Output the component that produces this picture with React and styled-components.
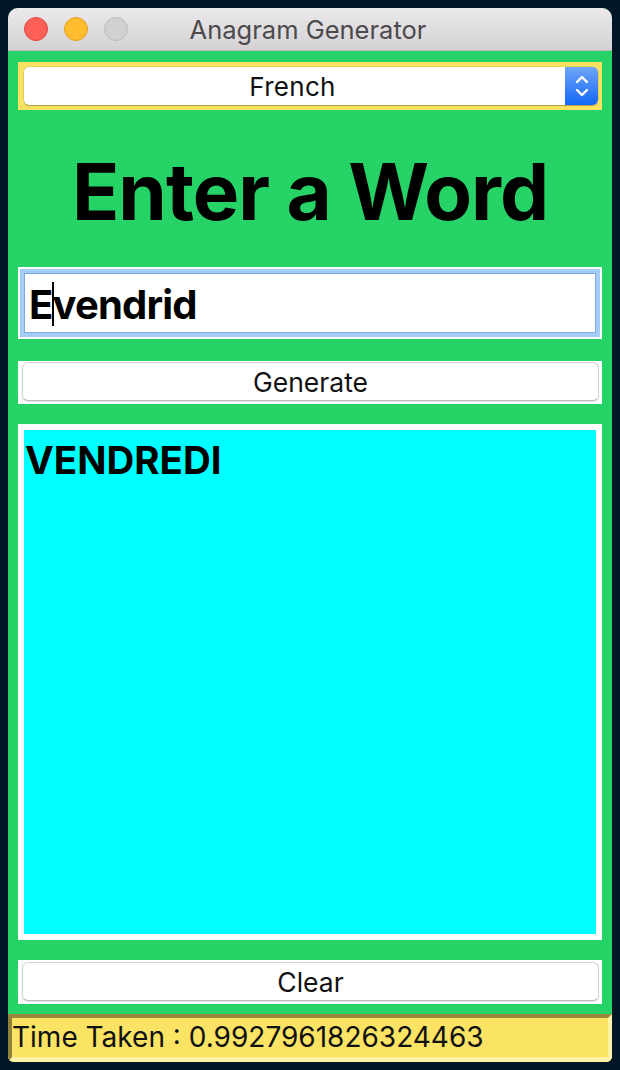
import React from "react";
import styled, { createGlobalStyle } from "styled-components";

const GlobalStyle = createGlobalStyle`
  html, body {
    margin: 0;
    padding: 0;
    background: #011627;
  }
  body {
    font-family: Inter, "Liberation Sans", sans-serif;
  }
`;

const Window = styled.div`
  margin: 8px;
  width: 604px;
  height: 1054px;
  display: flex;
  flex-direction: column;
  border-radius: 10px 10px 6px 6px;
  overflow: hidden;
  background: #25d366;
`;

const TitleBar = styled.div`
  height: 42px;
  flex-shrink: 0;
  display: grid;
  grid-template-columns: 1fr auto 1fr;
  align-items: center;
  padding: 0 16px;
  background: linear-gradient(#ebe9eb, #d4d2d4);
  border-bottom: 1px solid #b9b7b9;
`;

const Lights = styled.div`
  display: flex;
  gap: 16px;
`;

const Light = styled.span`
  width: 24px;
  height: 24px;
  box-sizing: border-box;
  border-radius: 50%;
  background: ${(p) => p.$fill};
  border: 1px solid ${(p) => p.$edge};
`;

const Title = styled.div`
  font-size: 25.5px;
  color: #4c4a4c;
  transform: translateX(-2px);
`;

const Content = styled.div`
  flex: 1;
  display: flex;
  flex-direction: column;
  padding: 11px 10px 10px;
`;

const SelectFrame = styled.div`
  background: #fbe361;
  padding: 5px 4px 5px 6px;
  height: 48px;
  box-sizing: border-box;
`;

const Select = styled.div`
  height: 38px;
  display: flex;
  background: #fff;
  border-radius: 5px;
  box-shadow: 0 1px 1px rgba(0, 0, 0, 0.25), 0 0 0 0.5px rgba(0, 0, 0, 0.15);
  overflow: hidden;
`;

const SelectValue = styled.div`
  flex: 1;
  display: flex;
  align-items: center;
  justify-content: center;
  padding-right: 4px;
  font-size: 26px;
  letter-spacing: 0.3px;
  color: #111;
`;

const Stepper = styled.div`
  width: 33px;
  display: flex;
  align-items: center;
  justify-content: center;
  background: linear-gradient(#6ea5f8, #1468f6);
  border-radius: 0 5px 5px 0;
`;

const Heading = styled.h1`
  margin: 0;
  height: 157px;
  display: flex;
  align-items: center;
  justify-content: center;
  padding-top: 6px;
  box-sizing: border-box;
  font-size: 78px;
  font-weight: 700;
  color: #000;
  letter-spacing: -1px;
`;

const Stack = styled.div`
  display: flex;
  flex-direction: column;
  gap: 20px;
`;

const Frame = styled.div`
  background: #fff;
  padding: ${(p) => p.$pad || "2px"};
  box-sizing: border-box;
  height: ${(p) => p.$h}px;
`;

const Field = styled.div`
  height: 100%;
  box-sizing: border-box;
  border: 4px solid #a5cbf7;
  box-shadow: inset 0 0 0 1px #7ea9e0;
  display: flex;
  align-items: center;
  padding-left: 5px;
  padding-top: 2px;
  font-size: 40px;
  font-weight: 700;
  letter-spacing: -0.8px;
  color: #000;
`;

const Caret = styled.span`
  display: inline-block;
  width: 2px;
  height: 44px;
  background: #000;
  margin: 0 -1px;
  vertical-align: middle;
`;

const Button = styled.button`
  width: 100%;
  height: 39px;
  border: 1px solid #d2d2d2;
  border-bottom-color: #bdbdbd;
  border-radius: 6px;
  background: #fff;
  box-shadow: 0 1px 1px rgba(0, 0, 0, 0.12);
  font-family: Inter, "Liberation Sans", sans-serif;
  font-size: 26.5px;
  color: #111;
  padding: 0;
`;

const Output = styled.div`
  height: 100%;
  background: #00ffff;
  padding: 7px 1px;
  box-sizing: border-box;
  font-size: 38.5px;
  font-weight: 700;
  color: #000;
`;

const StatusBar = styled.div`
  height: 48px;
  flex-shrink: 0;
  box-sizing: border-box;
  background: #fbe464;
  border-style: solid;
  border-width: 4px 4px 5px 4px;
  border-color: #9b8a3b #fff4a6 #fff4a6 #8f803a;
  display: flex;
  align-items: center;
  font-size: 28px;
  color: #111;
  padding-bottom: 2px;
`;

export default function App() {
  return (
    <>
      <GlobalStyle />
      <Window>
        <TitleBar>
          <Lights>
            <Light $fill="#fe5f57" $edge="#e2463f" />
            <Light $fill="#febc2e" $edge="#e0a123" />
            <Light $fill="#d2d0d2" $edge="#bcbabc" />
          </Lights>
          <Title>Anagram Generator</Title>
          <span />
        </TitleBar>
        <Content>
          <SelectFrame>
            <Select>
              <SelectValue>French</SelectValue>
              <Stepper>
                <svg width="16" height="26" viewBox="0 0 16 26" fill="none" stroke="#fff" strokeWidth="2.4" strokeLinecap="round" strokeLinejoin="round">
                  <path d="M3 9 L8 4 L13 9" />
                  <path d="M3 17 L8 22 L13 17" />
                </svg>
              </Stepper>
            </Select>
          </SelectFrame>
          <Heading>Enter a Word</Heading>
          <Stack>
            <Frame $h={72} style={{ marginBottom: 2 }}>
              <Field>
                E<Caret />vendrid
              </Field>
            </Frame>
            <Frame $h={43} $pad="1px 3px 3px 4px">
              <Button>Generate</Button>
            </Frame>
            <Frame $h={516} $pad="6px">
              <Output>VENDREDI</Output>
            </Frame>
            <Frame $h={44} $pad="2px 3px 3px 4px">
              <Button>Clear</Button>
            </Frame>
          </Stack>
        </Content>
        <StatusBar>Time Taken : 0.9927961826324463</StatusBar>
      </Window>
    </>
  );
}
